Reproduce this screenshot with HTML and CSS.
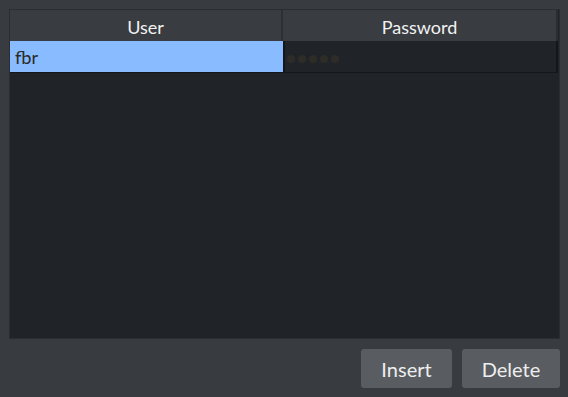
FILE: index.html
```html
<!DOCTYPE html>
<html lang="en">

<head>
  <meta charset="UTF-8">
  <meta name="viewport" content="width=device-width, initial-scale=1.0">
  <title>Users</title>
  <link rel="stylesheet" href="styles.css">
</head>

<body>
  <div class="grid">
    <div class="head">
      <div class="th">User</div>
      <div class="th">Password</div>
    </div>
    <div class="row">
      <div class="td selected">fbr</div>
      <div class="td pass">
        <span class="dot"></span>
        <span class="dot"></span>
        <span class="dot"></span>
        <span class="dot"></span>
        <span class="dot"></span>
      </div>
    </div>
  </div>
  <div class="buttons">
    <button class="btn insert">Insert</button>
    <button class="btn delete">Delete</button>
  </div>
</body>

</html>
```

FILE: styles.css
```css
body {
  margin: 0;
  padding: 9px 8px 0 9px;
  background: #383b40;
  font-family: Lato, "Noto Sans", sans-serif;
}

.grid {
  height: 328px;
  border: 1px solid #2a2d31;
  background: #202328;
}

.head {
  display: grid;
  grid-template-columns: 273px 275px;
  height: 31px;
}

.th {
  background: #393c41;
  color: #f2f2f2;
  font-size: 18px;
  line-height: 28px;
  padding-top: 3px;
  text-align: center;
  border-right: 2px solid #2c2f33;
}

.th:last-child {
  border-right: 2px solid #2a2d31;
}

.row {
  display: grid;
  grid-template-columns: 273px 275px;
  height: 33px;
}

.td {
  height: 32px;
  border-bottom: 1px solid #141619;
}

.selected {
  background: #88bbff;
  color: #2a2a2a;
  font-size: 18px;
  line-height: 32px;
  padding-left: 5px;
  box-sizing: border-box;
  width: 273px;
}

.pass {
  display: flex;
  align-items: center;
  gap: 3px;
  padding: 4px 0 0 2px;
  border-right: 2px solid #141619;
  border-left: 2px solid #141619;
  box-sizing: border-box;
}

.dot {
  width: 8px;
  height: 8px;
  border-radius: 50%;
  background: #2d2c27;
}

.buttons {
  display: flex;
  justify-content: flex-end;
  gap: 10px;
  margin-top: 10px;
}

.btn {
  height: 39px;
  border: none;
  border-radius: 3px;
  background: #595d61;
  color: #eeeeee;
  font-family: Lato, "Noto Sans", sans-serif;
  font-size: 20px;
  padding: 0;
}

.insert {
  width: 91px;
}

.delete {
  width: 98px;
}
```
